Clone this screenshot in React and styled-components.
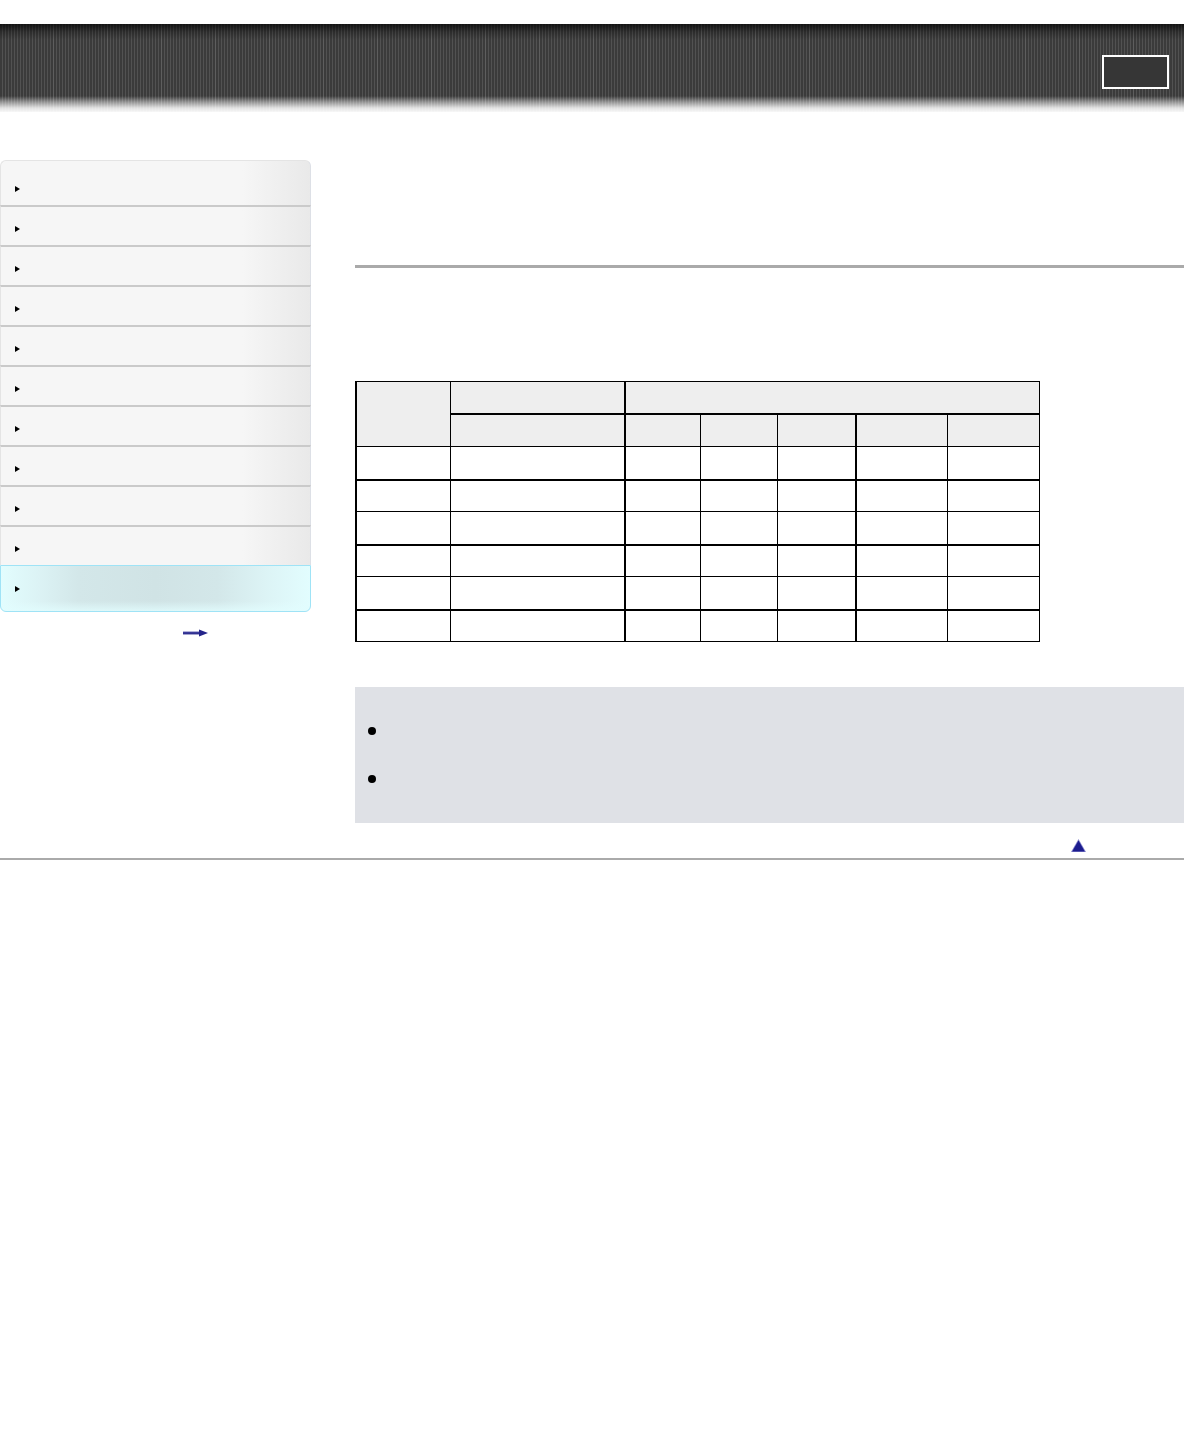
import React from "react";
import styled, { createGlobalStyle } from "styled-components";

const GlobalStyle = createGlobalStyle`
  html, body { margin: 0; padding: 0; background: #ffffff; }
  body { font-family: "Liberation Sans", Arial, sans-serif; font-size: 12px; color: #000; }
  * { box-sizing: border-box; }
`;

const Page = styled.div`
  width: 1184px;
  min-height: 1440px;
  background: #fff;
`;

const Header = styled.header`
  margin-top: 24px;
  height: 88px;
  display: flex;
  justify-content: flex-end;
  align-items: flex-start;
  padding: 31px 15px 0 0;
  background:
    linear-gradient(180deg,
      rgba(0,0,0,0.7) 0px,
      rgba(0,0,0,0.25) 8px,
      rgba(0,0,0,0) 16px,
      rgba(0,0,0,0) 72px,
      rgba(255,255,255,0.45) 78px,
      rgba(255,255,255,0.85) 84px,
      rgba(255,255,255,0.96) 88px),
    repeating-linear-gradient(90deg, transparent 0 53px, rgba(255,255,255,0.07) 53px 54px),
    repeating-linear-gradient(90deg, #3b3b3b 0 2px, #525252 2px 3px);
`;

const SearchBox = styled.div`
  width: 67px;
  height: 34px;
  border: 2px solid #ffffff;
  background: #363636;
`;

const Main = styled.div`
  display: grid;
  grid-template-columns: 311px 1fr;
  column-gap: 44px;
  padding-top: 48px;
`;

const SideColumn = styled.nav`
  display: flex;
  flex-direction: column;
`;

const Menu = styled.ul`
  list-style: none;
  margin: 0;
  padding: 0;
  display: flex;
  flex-direction: column;
`;

const MenuItem = styled.li`
  height: ${(p) => (p.$first ? 45 : 40)}px;
  display: flex;
  align-items: center;
  padding: ${(p) => (p.$first ? 12 : 6)}px 0 0 14px;
  border-left: 1px solid #e4e4e4;
  border-right: 1px solid #dde0e6;
  border-top: ${(p) => (p.$first ? "1px solid #e4e4e4" : "2px solid #cacaca")};
  border-radius: ${(p) => (p.$first ? "6px 6px 0 0" : "0")};
  background: linear-gradient(90deg, #f6f6f6 0%, #f6f6f6 78%, #e9e9e9 100%);
`;

const ActiveItem = styled.li`
  height: 47px;
  display: flex;
  align-items: center;
  padding: 0 0 0 14px;
  border: 1px solid #9fe3f6;
  border-radius: 0 0 6px 6px;
  background:
    linear-gradient(180deg, rgba(226,253,254,0) 78%, rgba(226,253,254,0.8) 100%),
    linear-gradient(90deg, #e2fdfe 0%, #dcf3f5 12%, #d3e7e9 25%, #d0e3e5 50%, #d3e7e9 70%, #dcf3f5 85%, #e2fdfe 100%);
`;

const Caret = styled.span`
  width: 0;
  height: 0;
  border-left: 5px solid #000;
  border-top: 3px solid transparent;
  border-bottom: 3px solid transparent;
`;

const MoreLink = styled.a`
  display: block;
  margin: 17px 0 0 183px;
  width: 25px;
  height: 8px;
  line-height: 0;
`;

const Content = styled.main`
  display: flex;
  flex-direction: column;
`;

const Title = styled.h1`
  margin: 0;
  height: 105px;
`;

const Rule = styled.div`
  height: 3px;
  background: #aaaaaa;
`;

const Intro = styled.p`
  margin: 0;
  height: 113px;
`;

const Table = styled.table`
  table-layout: fixed;
  width: 685px;
  border-collapse: separate;
  border-spacing: 0;
  border-left: 2px solid #000;
  border-top: 1px solid #000;
`;

const Row = styled.tr`
  height: ${(p) => p.$h}px;
`;

const Cell = styled.td`
  padding: 0;
  background: ${(p) => (p.$head ? "#eeeeee" : "#ffffff")};
  border-right: ${(p) => (p.$thickRight ? 2 : 1)}px solid #000;
  border-bottom: ${(p) => (p.$thickBottom ? 2 : 1)}px solid #000;
`;

const Note = styled.div`
  margin-top: 45px;
  background: #dfe1e6;
  padding: 20px 0 20px 13px;
  display: flex;
  flex-direction: column;
`;

const NoteItem = styled.div`
  height: 48px;
  display: flex;
  align-items: center;
`;

const Dot = styled.span`
  width: 8px;
  height: 8px;
  border-radius: 50%;
  background: #000;
`;

const TopRow = styled.div`
  display: flex;
  justify-content: flex-end;
  padding: 16px 98px 0 0;
`;

const TopLink = styled.a`
  display: block;
  width: 15px;
  height: 13px;
  line-height: 0;
`;

const Footer = styled.footer`
  margin-top: 6px;
  height: 2px;
  background: #aaaaaa;
`;

const colWidths = [94, 175, 75, 77, 79, 91, 92];
const thickCols = [1, 4];
const bodyRows = [
  { h: 34, thick: true },
  { h: 31, thick: false },
  { h: 34, thick: true },
  { h: 31, thick: false },
  { h: 34, thick: true },
  { h: 31, thick: false },
];

export default function App() {
  const grayItems = Array.from({ length: 10 });
  return (
    <Page>
      <GlobalStyle />
      <Header>
        <SearchBox />
      </Header>
      <Main>
        <SideColumn>
          <Menu>
            {grayItems.map((_, i) => (
              <MenuItem key={i} $first={i === 0}>
                <Caret />
              </MenuItem>
            ))}
            <ActiveItem>
              <Caret />
            </ActiveItem>
          </Menu>
          <MoreLink>
            <svg width="25" height="8" viewBox="0 0 25 8">
              <defs>
                <linearGradient id="arrowShade" x1="0" y1="0" x2="0" y2="1">
                  <stop offset="0" stopColor="#6a6ab8" />
                  <stop offset="0.5" stopColor="#24248a" />
                  <stop offset="1" stopColor="#4a4aa0" />
                </linearGradient>
              </defs>
              <rect x="0" y="2.5" width="17" height="3" fill="url(#arrowShade)" />
              <polygon points="16,0.5 25,4 16,7.5" fill="#24248a" />
            </svg>
          </MoreLink>
        </SideColumn>
        <Content>
          <Title />
          <Rule />
          <Intro />
          <Table>
            <colgroup>
              {colWidths.map((w, i) => (
                <col key={i} style={{ width: w }} />
              ))}
            </colgroup>
            <tbody>
              <Row $h={33}>
                <Cell $head rowSpan={2} />
                <Cell $head $thickRight $thickBottom />
                <Cell $head colSpan={5} $thickBottom />
              </Row>
              <Row $h={32}>
                <Cell $head $thickRight />
                {[2, 3, 4, 5, 6].map((c) => (
                  <Cell key={c} $head $thickRight={thickCols.includes(c)} />
                ))}
              </Row>
              {bodyRows.map((r, ri) => (
                <Row key={ri} $h={r.h}>
                  {colWidths.map((_, c) => (
                    <Cell key={c} $thickRight={thickCols.includes(c)} $thickBottom={r.thick} />
                  ))}
                </Row>
              ))}
            </tbody>
          </Table>
          <Note>
            <NoteItem>
              <Dot />
            </NoteItem>
            <NoteItem>
              <Dot />
            </NoteItem>
          </Note>
          <TopRow>
            <TopLink>
              <svg width="15" height="13" viewBox="0 0 15 13">
                <polygon points="7.5,0 15,13 0,13" fill="#8a8ad0" />
                <polygon points="7.5,1.5 13.8,12.4 1.2,12.4" fill="#1c1c8e" />
              </svg>
            </TopLink>
          </TopRow>
        </Content>
      </Main>
      <Footer />
    </Page>
  );
}
